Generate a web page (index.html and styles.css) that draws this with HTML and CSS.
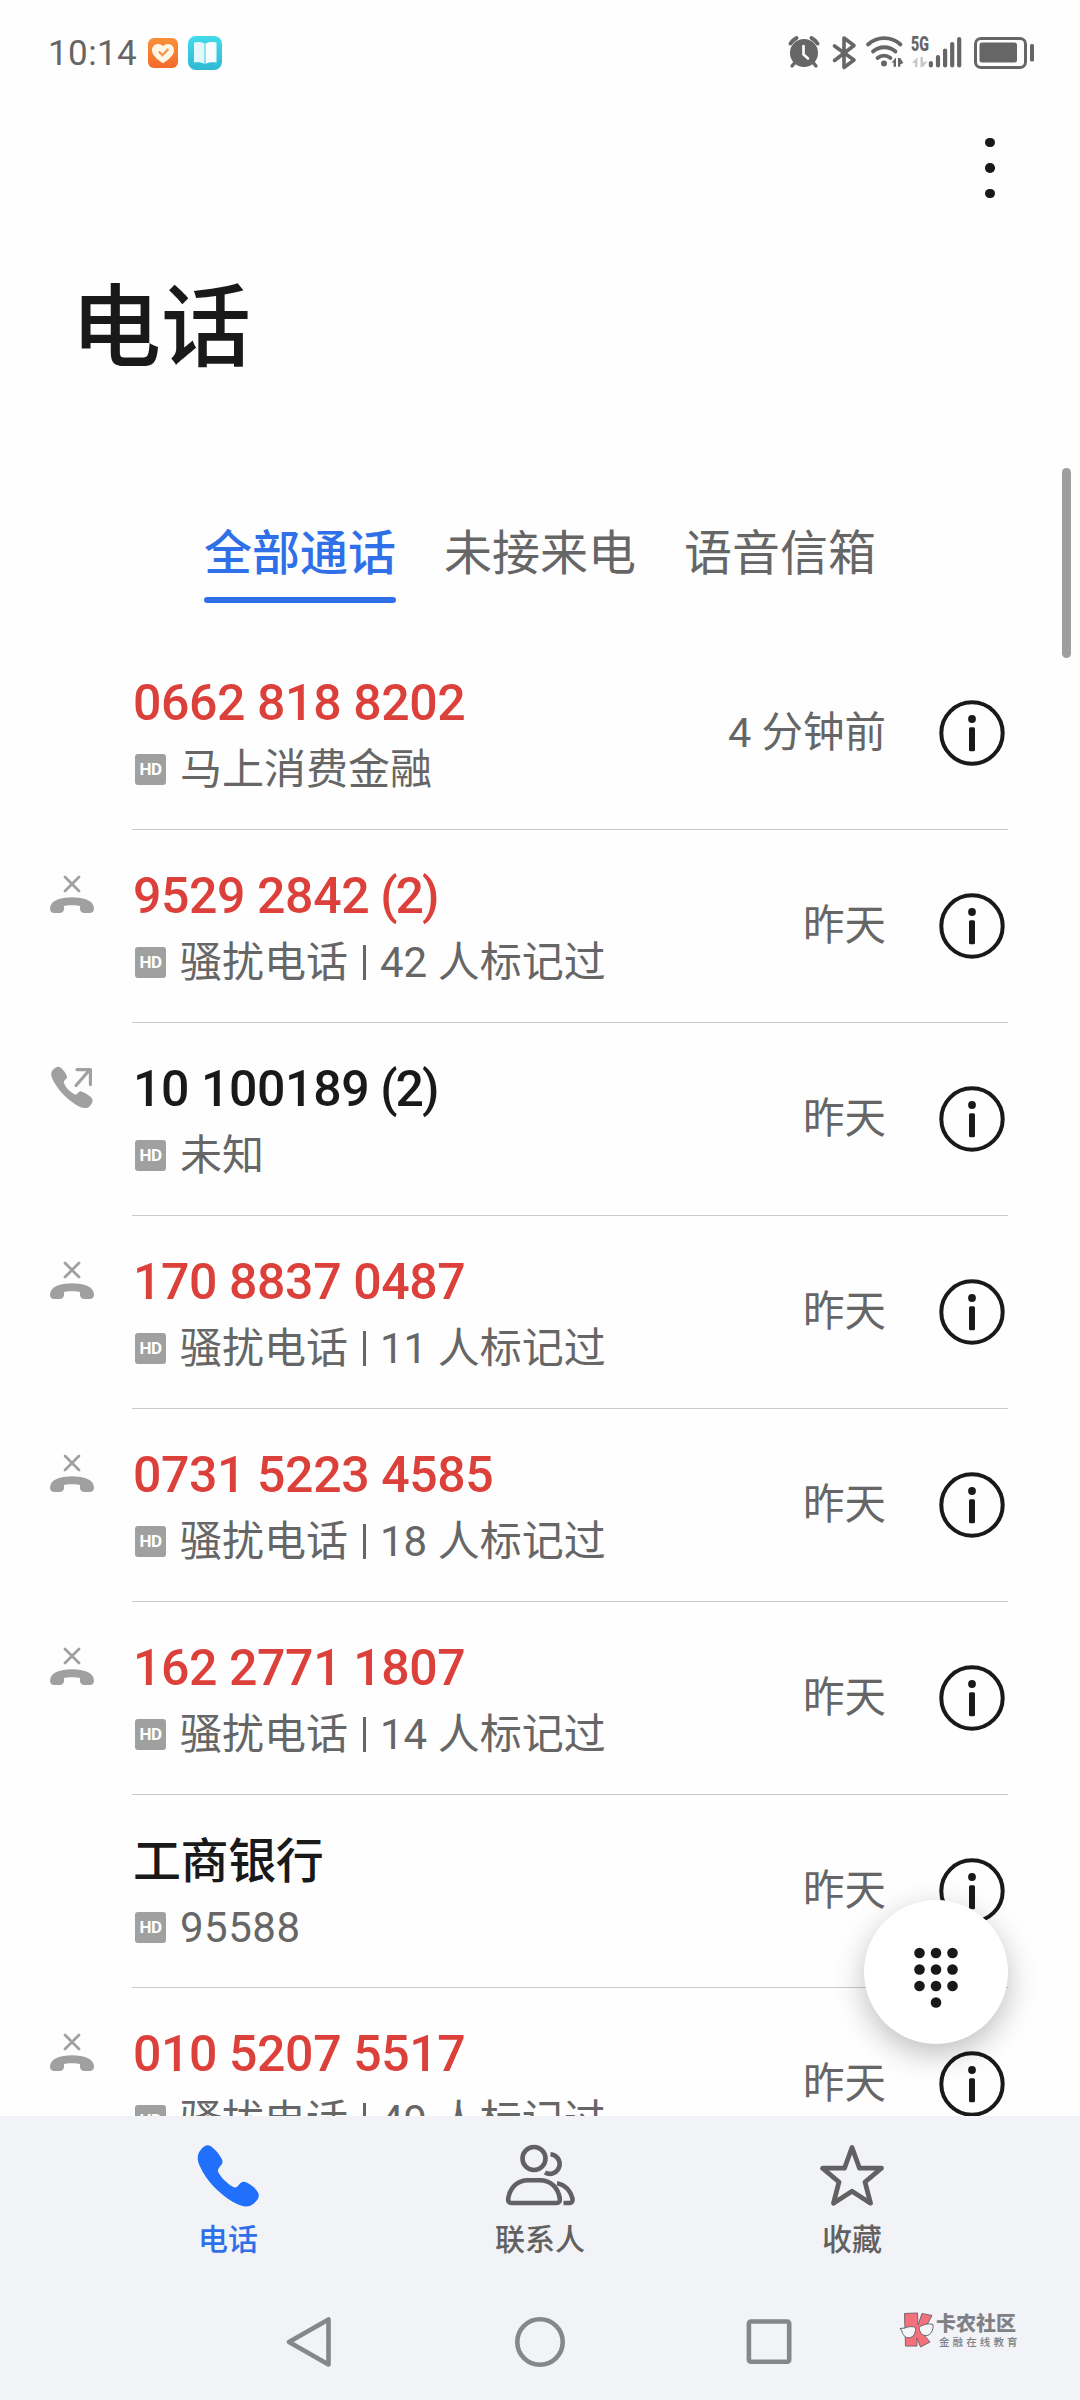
FILE: index.html
```html
<!DOCTYPE html>
<html lang="zh-CN">
<head>
  <meta charset="UTF-8">
  <meta name="viewport" content="width=device-width, initial-scale=1.0">
  <title>电话</title>
  <link rel="stylesheet" href="styles.css">
</head>
<body>
  <!-- shared icons -->
  <svg class="sprite" width="0" height="0">
    <symbol id="icon-info" viewBox="0 0 66 66">
      <circle cx="33" cy="33" r="30.7" fill="none" stroke="#191919" stroke-width="4"/>
      <circle cx="33" cy="19" r="3.9" fill="#191919"/>
      <rect x="30" y="27.2" width="6" height="24" rx="1.5" fill="#191919"/>
    </symbol>
    <symbol id="icon-missed" viewBox="0 0 44 44">
      <path d="M15 5l14 14M29 5L15 19" fill="none" stroke="#a0a0a0" stroke-width="2.8" stroke-linecap="round"/>
      <path d="M0 37C0 28.500 10 25.200 22 25.200S44 28.500 44 37C44 39.700 42 41 39.500 41H34.500C31.500 41 30 39.300 30 37V34.100C27.500 32.800 16.500 32.800 14 34.100V37C14 39.300 12.500 41 9.500 41H4.500C2 41 0 39.700 0 37Z" fill="#a0a0a0"/>
    </symbol>
    <symbol id="icon-out" viewBox="0 0 44 44">
      <path d="M26 20.500L39.500 5M27 4.600H40.400V19.600" fill="none" stroke="#a0a0a0" stroke-width="3.200" stroke-linecap="round" stroke-linejoin="round"/>
      <path d="M2 6C4.500 2.500 8 .600 10.500 2.600C13.500 5 16 8.500 17 11.500C17.800 14 13.200 15 14 18C15.500 22.500 20 27 25 29.500C27.200 30.500 28.500 25.500 31.500 26.500C35.500 27.800 39 30.500 41.600 33C44 35.500 42 39 39.500 41.500C36.500 44.500 31 43 25.500 39.500C14 32 6 22 2.200 13.500C1 10.500 .800 8 2 6Z" fill="#a0a0a0"/>
    </symbol>
  </svg>

  <div class="phone">
    <header class="status-bar">
      <div class="status-left">
        <span class="clock">10:14</span>
        <svg class="app-health" width="30" height="30" viewBox="0 0 30 30">
          <defs><linearGradient id="orange" x1="0" y1="0" x2="0" y2="1"><stop offset="0" stop-color="#fa9038"/><stop offset="1" stop-color="#f36a2b"/></linearGradient></defs>
          <rect width="30" height="30" rx="6" fill="url(#orange)"/>
          <path d="M15 25.200C9 21 4 17.500 4 12C4 6 11.500 4.200 15 8.200C18.500 4.200 26 6 26 12C26 17.500 21 21 15 25.200Z" fill="#fff6e6"/>
          <path d="M10.800 13.500l3.600 3.600 6-6" fill="none" stroke="#f59a4a" stroke-width="2.200"/>
        </svg>
        <svg class="app-read" width="34" height="34" viewBox="0 0 34 34">
          <defs><linearGradient id="teal" x1="0" y1="0" x2="0" y2="1"><stop offset="0" stop-color="#42dbea"/><stop offset="1" stop-color="#30b9d3"/></linearGradient></defs>
          <rect width="34" height="34" rx="8" fill="url(#teal)"/>
          <path d="M6 6.500C10 5.500 14 5.800 16.500 7.500V28C14 26 10 25.800 6 26.500Z" fill="#e4f7fa"/>
          <path d="M28.500 6.500C24 5.500 20 5.800 17.500 7.500V28C20 26 24 25.800 28.500 26.500Z" fill="#f8feff"/>
        </svg>
      </div>
      <svg class="status-icons" width="250" height="36" viewBox="0 0 250 36">
        <!-- alarm -->
        <circle cx="19" cy="18" r="14" fill="#666"/>
        <path d="M5.500 8.500A17 17 0 0 1 11.500 3M26.500 3A17 17 0 0 1 32.500 8.500" fill="none" stroke="#666" stroke-width="4" stroke-linecap="round"/>
        <path d="M9.500 28l-2.500 3M28.500 28l2.500 3" stroke="#666" stroke-width="3.400" stroke-linecap="round"/>
        <path d="M18.500 11v8.500l4.500 4" fill="none" stroke="#fff" stroke-width="2.600" stroke-linecap="round"/>
        <!-- bluetooth -->
        <path d="M49.500 11L69 25L59 32.500V3L69 10.500L49.500 25.500" fill="none" stroke="#666" stroke-width="3.600" stroke-linejoin="round" stroke-linecap="round"/>
        <!-- wifi -->
        <path d="M83 9.500A24 24 0 0 1 115.500 9.500M88 16.500A17 17 0 0 1 110.500 16.500M92.500 23A10.300 10.300 0 0 1 105.500 23" fill="none" stroke="#666" stroke-width="3.800" stroke-linecap="round"/>
        <circle cx="99" cy="28.500" r="3" fill="#666"/>
        <path d="M106.500 27.500l4.500-5v9.200h-2.400v-4.200zM113 23h2.300l3 5-3 1.500v2.200H113z" fill="#666"/>
        <!-- mobile signal -->
        <text class="net-label" x="126" y="15.800" textLength="18" lengthAdjust="spacingAndGlyphs">5G</text>
        <path d="M127 28l5.500-6v10h-2.500v-4zM135.500 22h2.500v5.500l4.500-1.500-4.500 6h-2.500z" fill="#c8c8c8"/>
        <path d="M145.900 28v2.500M153 22v8.500M160.100 15.500v15M167.200 9v21.500M174.200 4v26.500" stroke="#666" stroke-width="4.200" stroke-linecap="round"/>
        <!-- battery -->
        <rect x="190.500" y="3.500" width="50" height="29" rx="5.500" fill="none" stroke="#666" stroke-width="3"/>
        <rect x="194.500" y="7.500" width="37.500" height="20" rx="2.500" fill="#666"/>
        <rect x="245" y="9" width="4" height="17.500" rx="1.500" fill="#666"/>
      </svg>
    </header>

    <div class="toolbar">
      <button class="more-btn" aria-label="更多">
        <span></span><span></span><span></span>
      </button>
    </div>

    <h1>电话</h1>

    <nav class="tabs">
      <a class="tab active">全部通话</a>
      <a class="tab">未接来电</a>
      <a class="tab">语音信箱</a>
    </nav>

    <main class="call-list">
      <div class="call missed">
        <div class="call-type"></div>
        <div class="call-body">
          <div class="call-text">
            <p class="number">0662 818 8202</p>
            <p class="detail"><span class="hd">HD</span>马上消费金融</p>
          </div>
          <span class="time">4 分钟前</span>
          <svg class="info"><use href="#icon-info"/></svg>
        </div>
      </div>
      <div class="call missed">
        <div class="call-type"><svg><use href="#icon-missed"/></svg></div>
        <div class="call-body">
          <div class="call-text">
            <p class="number">9529 2842 <span class="count">(2)</span></p>
            <p class="detail"><span class="hd">HD</span>骚扰电话<i class="bar"></i>42 人标记过</p>
          </div>
          <span class="time">昨天</span>
          <svg class="info"><use href="#icon-info"/></svg>
        </div>
      </div>
      <div class="call">
        <div class="call-type"><svg><use href="#icon-out"/></svg></div>
        <div class="call-body">
          <div class="call-text">
            <p class="number">10 100189 <span class="count">(2)</span></p>
            <p class="detail"><span class="hd">HD</span>未知</p>
          </div>
          <span class="time">昨天</span>
          <svg class="info"><use href="#icon-info"/></svg>
        </div>
      </div>
      <div class="call missed">
        <div class="call-type"><svg><use href="#icon-missed"/></svg></div>
        <div class="call-body">
          <div class="call-text">
            <p class="number">170 8837 0487</p>
            <p class="detail"><span class="hd">HD</span>骚扰电话<i class="bar"></i>11 人标记过</p>
          </div>
          <span class="time">昨天</span>
          <svg class="info"><use href="#icon-info"/></svg>
        </div>
      </div>
      <div class="call missed">
        <div class="call-type"><svg><use href="#icon-missed"/></svg></div>
        <div class="call-body">
          <div class="call-text">
            <p class="number">0731 5223 4585</p>
            <p class="detail"><span class="hd">HD</span>骚扰电话<i class="bar"></i>18 人标记过</p>
          </div>
          <span class="time">昨天</span>
          <svg class="info"><use href="#icon-info"/></svg>
        </div>
      </div>
      <div class="call missed">
        <div class="call-type"><svg><use href="#icon-missed"/></svg></div>
        <div class="call-body">
          <div class="call-text">
            <p class="number">162 2771 1807</p>
            <p class="detail"><span class="hd">HD</span>骚扰电话<i class="bar"></i>14 人标记过</p>
          </div>
          <span class="time">昨天</span>
          <svg class="info"><use href="#icon-info"/></svg>
        </div>
      </div>
      <div class="call">
        <div class="call-type"></div>
        <div class="call-body">
          <div class="call-text">
            <p class="number name">工商银行</p>
            <p class="detail digits"><span class="hd">HD</span>95588</p>
          </div>
          <span class="time">昨天</span>
          <svg class="info"><use href="#icon-info"/></svg>
        </div>
      </div>
      <div class="call missed">
        <div class="call-type"><svg><use href="#icon-missed"/></svg></div>
        <div class="call-body">
          <div class="call-text">
            <p class="number">010 5207 5517</p>
            <p class="detail"><span class="hd">HD</span>骚扰电话<i class="bar"></i>49 人标记过</p>
          </div>
          <span class="time">昨天</span>
          <svg class="info"><use href="#icon-info"/></svg>
        </div>
      </div>
    </main>

    <footer class="bottom">
      <nav class="bottom-nav">
        <a class="nav-item active">
          <svg width="72" height="72" viewBox="0 0 72 72">
            <path d="M7 12.500C10 7 14.500 3.500 18.500 6C23 9 27.500 14.500 30 19.500C32.500 25 25 27 26 31.500C29 38 36 44.500 42.500 47.500C46 48.500 47.500 41 52.500 41.800C58 43.500 63.500 48 66 52.500C68.500 57.500 64.500 61.500 60.500 64.500C56 68 49 66.500 41 62C26 53 14 40 8 26.500C5.500 21 4.800 16.500 7 12.500Z" fill="#2170fb"/>
          </svg>
          <span>电话</span>
        </a>
        <a class="nav-item">
          <svg width="72" height="72" viewBox="0 0 72 72" fill="none" stroke="#616161" stroke-width="4.600">
            <circle cx="30" cy="18.500" r="11.500"/>
            <path d="M24 40.200H36C47 40.200 54 48 55.700 58C56.200 61.500 55 63 52.500 63H7.500C5 63 3.800 61.500 4.300 58C6 48 13 40.200 24 40.200Z"/>
            <path d="M46.500 14.200A9.800 9.800 0 1 1 41 32.500"/>
            <path d="M53 43.200C62 44.800 67 52 68.500 58.500C69 61.500 67.500 63 65.500 63H59.500"/>
          </svg>
          <span>联系人</span>
        </a>
        <a class="nav-item">
          <svg width="72" height="72" viewBox="0 0 72 72">
            <path d="M36 7.500L43.500 28.200H65.500L49 42L54.500 63.200L36 51.200L17.500 63.200L23 42L6.500 28.200H28.500Z" fill="none" stroke="#616161" stroke-width="4.800" stroke-linejoin="round"/>
          </svg>
          <span>收藏</span>
        </a>
      </nav>
      <div class="system-nav">
        <svg width="52" height="52" viewBox="0 0 52 52"><path d="M43.500 3.500V48.500L4 26Z" fill="none" stroke="#868788" stroke-width="4.600" stroke-linejoin="round"/></svg>
        <svg width="52" height="52" viewBox="0 0 52 52"><circle cx="26" cy="26" r="22.700" fill="none" stroke="#868788" stroke-width="4.600"/></svg>
        <svg width="52" height="52" viewBox="0 0 52 52"><rect x="5.900" y="5.500" width="40.300" height="40.300" rx="2" fill="none" stroke="#868788" stroke-width="4.600"/></svg>
      </div>
    </footer>

    <div class="scrollbar"></div>

    <button class="fab" aria-label="拨号盘">
      <svg width="48" height="64" viewBox="0 0 48 64" fill="#191919">
        <circle cx="7.500" cy="7" r="5.300"/><circle cx="24" cy="7" r="5.300"/><circle cx="40.500" cy="7" r="5.300"/>
        <circle cx="7.500" cy="23.500" r="5.300"/><circle cx="24" cy="23.500" r="5.300"/><circle cx="40.500" cy="23.500" r="5.300"/>
        <circle cx="7.500" cy="40" r="5.300"/><circle cx="24" cy="40" r="5.300"/><circle cx="40.500" cy="40" r="5.300"/>
        <circle cx="24" cy="56.500" r="5.300"/>
      </svg>
    </button>

    <div class="watermark">
      <svg width="36" height="36" viewBox="0 0 36 36">
        <path d="M5.500 1.500L18.500 1L19 13L23 1.500L33 3.500L27 14.500L22.500 20L31 30L21.500 35L18 26V34H6.500Z" fill="#f4717b" stroke="#75666d" stroke-width="1"/>
        <path d="M1 16.500L6 16C9 14.500 14 14 16.500 15.500C17 21 14.500 25.500 10 25.800C6 26 3.500 22.500 3 19ZM20 15.500C23 12.500 30 11 34 12.500C34.500 18 32 23 27.500 23.500C23.500 24 20.500 20.500 20 15.500Z" fill="#f4f5f9" stroke="#66646b" stroke-width="1"/>
      </svg>
      <div class="watermark-text">
        <strong>卡农社区</strong>
        <small>金融在线教育</small>
      </div>
    </div>
  </div>
</body>
</html>
```

FILE: styles.css
```css
* {
  margin: 0;
  padding: 0;
  box-sizing: border-box;
}

body {
  font-family: Roboto, 'Noto Sans CJK SC', sans-serif;
  background-color: #fefefe;
  color: #191919;
}

button {
  border: none;
  background: none;
}

svg {
  display: block;
}

.sprite {
  position: absolute;
}

.phone {
  position: relative;
  width: 1080px;
  height: 2400px;
  display: flex;
  flex-direction: column;
  overflow: hidden;
}

/* Status bar */
.status-bar {
  height: 106px;
  padding: 0 45px 0 48px;
  display: flex;
  align-items: center;
  justify-content: space-between;
}

.status-left {
  display: flex;
  align-items: center;
}

.clock {
  width: 100px;
  font-size: 35px;
  letter-spacing: 0.4px;
  color: #666;
}

.app-read {
  margin-left: 10px;
}

.net-label {
  font-size: 19.5px;
  font-weight: 900;
  fill: #666;
}

/* Header */
.toolbar {
  height: 124px;
  padding-right: 80px;
  display: flex;
  justify-content: flex-end;
  align-items: center;
}

.more-btn {
  display: flex;
  flex-direction: column;
  gap: 16px;
  width: 20px;
  align-items: center;
}

.more-btn span {
  width: 9.4px;
  height: 9.4px;
  border-radius: 50%;
  background-color: #191919;
}

h1 {
  height: 200px;
  padding-left: 71px;
  line-height: 198px;
  font-size: 90px;
  font-weight: 500;
}

.tabs {
  height: 207px;
  padding-top: 93px;
  display: flex;
  justify-content: center;
  align-items: flex-start;
  gap: 48px;
}

.tab {
  height: 80px;
  line-height: 61px;
  font-size: 48px;
  color: #666;
}

.tab.active {
  display: flex;
  flex-direction: column;
  justify-content: space-between;
  color: #2f6fe8;
  font-weight: 500;
}

.tab.active::after {
  content: '';
  height: 6px;
  border-radius: 3px;
  background-color: #2f6fe8;
}

/* Call list */
.call-list {
  height: 1479px;
  overflow: hidden;
}

.call {
  height: 193px;
  padding-right: 72px;
  display: flex;
}

.call-type {
  width: 132px;
  padding: 42px 0 0 50px;
}

.call-type svg {
  width: 44px;
  height: 44px;
}

.call-body {
  flex: 1;
  display: flex;
  align-items: center;
  border-bottom: 1px solid #c9c9c9;
}

.call-text {
  flex: 1;
  height: 192px;
  padding: 36px 0 0 1px;
}

.number {
  height: 67px;
  line-height: 60px;
  font-size: 50px;
  font-weight: 500;
  letter-spacing: -0.4px;
}

.number.name {
  padding-top: 1px;
  font-size: 48px;
}

.count {
  margin-left: -1px;
  letter-spacing: -2px;
}

.missed .number {
  color: #dc403a;
}

.detail {
  display: flex;
  align-items: center;
  height: 60px;
  line-height: 60px;
  font-size: 42px;
  white-space: pre;
  color: #666;
}

.digits {
  letter-spacing: 0.5px;
}

.hd {
  width: 31px;
  height: 31px;
  margin: 0 14px 1px 2px;
  border-radius: 3px;
  background-color: #a0a0a0;
  color: #fff;
  font-size: 17px;
  font-weight: 700;
  letter-spacing: -0.5px;
  line-height: 31px;
  text-align: center;
}

.bar {
  width: 2.5px;
  height: 35px;
  margin: 0 14.5px 2px 15px;
  background-color: #666;
}

.time {
  margin-right: 53px;
  font-size: 41.5px;
  line-height: 60px;
  color: #666;
}

.info {
  width: 66px;
  height: 66px;
  margin-right: 3px;
}

/* Bottom area */
.bottom {
  flex: 1;
  background-color: #f1f3f7;
}

.bottom-nav {
  height: 168px;
  padding: 24px 72px 0;
  display: flex;
}

.nav-item {
  flex: 1;
  display: flex;
  flex-direction: column;
  align-items: center;
  font-size: 30px;
  font-weight: 500;
  line-height: 55px;
  color: #616161;
}

.nav-item.active {
  color: #2f6fe8;
}

.system-nav {
  height: 116px;
  display: flex;
  justify-content: center;
  align-items: center;
  gap: 177px;
}

.scrollbar {
  position: absolute;
  top: 468px;
  right: 9px;
  width: 9px;
  height: 190px;
  border-radius: 5px;
  background-color: #9e9e9e;
}

.fab {
  position: absolute;
  left: 864px;
  top: 1900px;
  width: 144px;
  height: 144px;
  padding-top: 12px;
  border-radius: 50%;
  background-color: #fff;
  box-shadow: 0 10px 30px rgba(0, 0, 0, 0.25);
  display: flex;
  align-items: center;
  justify-content: center;
}

.watermark {
  position: absolute;
  left: 899px;
  top: 2312px;
  display: flex;
}

.watermark-text {
  padding-left: 1px;
  color: #808186;
}

.watermark-text strong {
  display: block;
  font-size: 20px;
  font-weight: 900;
  line-height: 25px;
}

.watermark-text small {
  display: block;
  padding-left: 3px;
  font-size: 10.5px;
  font-weight: 500;
  letter-spacing: 3.1px;
  line-height: 11px;
}
```
